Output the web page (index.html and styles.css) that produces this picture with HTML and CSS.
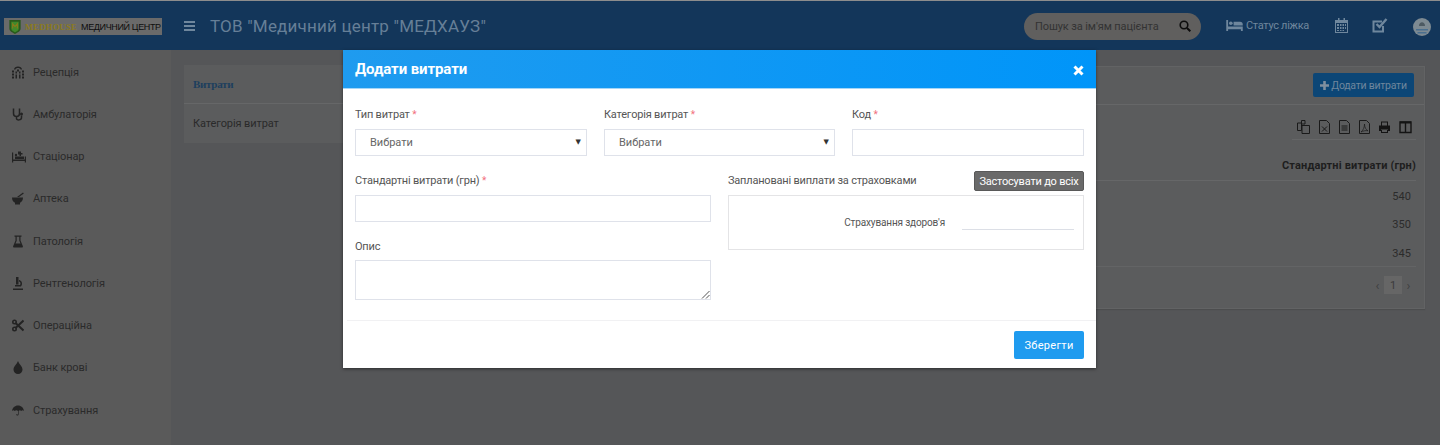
FILE: index.html
```html
<!DOCTYPE html>
<html lang="uk">
<head>
<meta charset="utf-8">
<title>Витрати</title>
<link rel="stylesheet" href="styles.css">
</head>
<body>
<header class="topbar">
  <div class="logo">
    <svg class="logo-mark" viewBox="0 0 12 16"><path d="M0 1h12v9c0 3-3 4-6 6-3-2-6-3-6-6z" fill="#2a5a1c"/><path d="M2 3h8v7c0 2-2 3-4 4-2-1-4-2-4-4z" fill="#3f8a2a"/><path d="M3.500 10V5l2.500 3 2.500-3v5" fill="none" stroke="#8a7a1a" stroke-width="1.200"/></svg>
    <span class="logo-brand">MEDHOUSE</span>
    <span class="logo-text">МЕДИЧНИЙ ЦЕНТР</span>
  </div>
  <svg class="burger" viewBox="0 0 11 10"><path d="M0 0h11v2H0zM0 4h11v2H0zM0 8h11v2H0z"/></svg>
  <h1 class="org">ТОВ "Медичний центр "МЕДХАУЗ"</h1>
  <div class="search">
    <span class="search-text">Пошук за ім'ям пацієнта</span>
    <svg class="search-icon" viewBox="0 0 12 12"><circle cx="5" cy="5" r="3.800" fill="none" stroke="#0c0c0c" stroke-width="1.600"/><path d="M8 8l3.300 3.300" stroke="#0c0c0c" stroke-width="2" fill="none"/></svg>
  </div>
  <div class="bed-status">
    <svg class="bar-icon-wide" viewBox="0 0 18 12"><path d="M0 0h2v7h16v5h-2v-2H2v2H0z"/><circle cx="5" cy="3.500" r="2"/><path d="M8 2h7c2 0 3 1 3 3v1H8z"/></svg>
    <span>Статус ліжка</span>
  </div>
  <svg class="calendar" viewBox="0 0 13 15"><path fill-rule="evenodd" d="M0 2h3V0h1.500v2h4V0H10v2h3v13H0zM1 5v9h11V5z"/><path d="M2 6h2v2H2zM5 6h1.500v2H5zM7.500 6H9v2H7.500zM10 6h1v2h-1zM2 9h2v2H2zM5 9h1.500v2H5zM7.500 9H9v2H7.500zM10 9h1v2h-1zM2 12h2v1H2zM5 12h1.500v1H5zM7.500 12H9v1H7.500z"/></svg>
  <svg class="checkbox" viewBox="0 0 16 15"><path d="M11 8v5.500H1.500v-10H10" fill="none" stroke="#6f879d" stroke-width="2"/><path d="M4.500 6l3 3 7-8" fill="none" stroke="#6f879d" stroke-width="2.400"/></svg>
  <svg class="avatar" viewBox="0 0 18 18"><circle cx="9" cy="9" r="9" fill="#7d8a92"/><path d="M6 8c0-5 6-5 6 0z" fill="#4d5a62"/><path d="M3 11h12v1.500H3zM4.500 14h9v1.500h-9z" fill="#4a6f8f"/></svg>
</header>

<div class="app">
  <nav class="sidebar">
    <a class="nav-item"><svg class="nav-icon" viewBox="0 0 12 12"><path d="M0 4h2v2H0zM0 7h2v2H0zM0 10h2v2H0zM10 4h2v2h-2zM10 7h2v2h-2zM10 10h2v2h-2zM2 3c0-4 8-4 8 0H8.500C8.500 1 3.500 1 3.500 3zM5 3h2v2H5zM3.500 5h1.500v2H3.500zM7 5h1.500v2H7zM3.500 8h1.500v4H3.500zM7 8h1.500v4H7z"/></svg><span>Рецепція</span></a>
    <a class="nav-item"><svg class="nav-icon" viewBox="0 0 12 12"><path d="M1.500 0v5c0 4 6 4 6 0V0M4.500 8v2c0 2 5 2 5-1V7" fill="none" stroke="#232323" stroke-width="1.500"/><circle cx="9.500" cy="5.500" r="1.500"/></svg><span>Амбулаторія</span></a>
    <a class="nav-item"><svg class="nav-icon nav-icon-wide" viewBox="0 0 14 12"><path d="M0 2h1.200v7h11.600V6H14v6h-1.200v-1.500H1.200V12H0z"/><path d="M3 6h9v2.500H3z"/><circle cx="4" cy="4.500" r="1.200"/><path d="M6 1h3v1.500h1.500V4H9v1.500H7.500V4H6z"/></svg><span>Стаціонар</span></a>
    <a class="nav-item"><svg class="nav-icon" viewBox="0 0 12 12"><path d="M0 5h11c0 3-1.500 4.500-3 5.300V12H3v-1.700C1.500 9.500 0 8 0 5z"/><path d="M5 4.500L11 0l.8 1L7 4.500z"/></svg><span>Аптека</span></a>
    <a class="nav-item"><svg class="nav-icon" viewBox="0 0 12 12"><path d="M2.500 0h7v1.200h-1V5L11 11l-.5 1h-9L1 11l2.500-6V1.200h-1zM4.700 1.200v4L3.500 8h5L7.300 5.200v-4z"/></svg><span>Патологія</span></a>
    <a class="nav-item"><svg class="nav-icon" viewBox="0 0 12 13"><path d="M1 11.500h10V13H1zM4 0h2.500v7.500H4z"/><path d="M7 3c3 .5 4 4 2 6.500H3V8h5c1-1 .5-3-1-3.500z"/></svg><span>Рентгенологія</span></a>
    <a class="nav-item"><svg class="nav-icon" viewBox="0 0 12 12"><circle cx="2.500" cy="2.500" r="1.700" fill="none" stroke="#232323" stroke-width="1.600"/><circle cx="2.500" cy="9.500" r="1.700" fill="none" stroke="#232323" stroke-width="1.600"/><path d="M3.500 3.500L11.500 11M3.500 8.500L11.500 1" stroke="#232323" stroke-width="2" fill="none"/></svg><span>Операційна</span></a>
    <a class="nav-item"><svg class="nav-icon" viewBox="0 0 12 13"><path d="M6 0c1 3 4.500 5.500 4.500 8.500A4.500 4.500 0 0 1 1.500 8.500C1.500 5.500 5 3 6 0z"/></svg><span>Банк крові</span></a>
    <a class="nav-item"><svg class="nav-icon" viewBox="0 0 13 13"><path d="M6.500 1C10 1 12.500 3.500 13 7c-1-1-2-1-3 0-1-1-2-1-2.800 0v3.500c0 2-2.700 2-2.700 0h1.300c0 .7.700.7.700 0V7C5.500 6 4 6 3 7c-1-1-2-1-3 0C.5 3.500 3 1 6.500 1z"/></svg><span>Страхування</span></a>
  </nav>

  <main class="content">
    <section class="panel side-panel">
      <div class="side-head">Витрати</div>
      <div class="side-row">Категорія витрат</div>
    </section>

    <section class="panel main-panel">
      <div class="main-head">
        <button class="add-btn"><svg class="plus" viewBox="0 0 9 9"><path d="M3.200 0h2.600v3.200H9v2.600H5.800V9H3.200V5.800H0V3.200h3.200z"/></svg>Додати витрати</button>
      </div>
      <div class="tools">
        <svg class="tool tool-wide" viewBox="0 0 13 14"><path d="M4.500 .5H8v3.500H4.500zM.5 3h4v7.500h-4zM5 5.500h7.500v8H5z" fill="none" stroke="#1a1a1a"/></svg>
        <svg class="tool" viewBox="0 0 11 14"><path d="M.5 .5h7l3 3v10H.5z" fill="none" stroke="#1a1a1a"/><path d="M3 6.500l5 5M8 6.500l-5 5" stroke="#1a1a1a"/></svg>
        <svg class="tool" viewBox="0 0 11 14"><path d="M.5 .5h7l3 3v10H.5z" fill="none" stroke="#1a1a1a"/><path d="M2.500 6h6M2.500 8h6M2.500 10h6" stroke="#1a1a1a"/></svg>
        <svg class="tool" viewBox="0 0 11 14"><path d="M.5 .5h7l3 3v10H.5z" fill="none" stroke="#1a1a1a"/><path d="M5.500 4c0 3-1 6-3.500 8 2-1 4.500-1.800 7-1.200-2-1-3.500-3.500-3.500-6.800z" fill="none" stroke="#1a1a1a" stroke-width=".7"/></svg>
        <svg class="tool" viewBox="0 0 11 14"><path d="M2 1.500h7v4H2zM0 5.500h11v5.500H9V9.500H2V11H0zM2 10h7v3H2z" fill="#141414"/><path d="M3 2.500h5v3H3zM3 10h5v2H3z" fill="#5a5b5c"/></svg>
        <svg class="tool tool-wide" viewBox="0 0 13 14"><path d="M1 2h11v10.500H1zM6.500 2v10.500" fill="none" stroke="#141414" stroke-width="1.400"/><path d="M1 1.500h11V3.500H1z" fill="#141414"/></svg>
      </div>
      <div class="table-head">Стандартні витрати (грн)</div>
      <div class="table-body">
        <div class="cell">540</div>
        <div class="cell">350</div>
        <div class="cell">345</div>
      </div>
      <div class="pager">
        <span class="pager-arrow">‹</span>
        <span class="pager-page">1</span>
        <span class="pager-arrow">›</span>
      </div>
    </section>
  </main>
</div>

<div class="modal">
  <div class="modal-head">
    <h2 class="modal-title">Додати витрати</h2>
    <svg class="modal-close" viewBox="0 0 11 11"><path d="M1.500 1.500l8 8M9.500 1.500l-8 8" stroke="#fff" stroke-width="3" fill="none"/></svg>
  </div>
  <div class="modal-body">
    <div class="row-three">
      <div class="field">
        <label class="label">Тип витрат <i class="req">*</i></label>
        <div class="select">Вибрати<span class="caret">▼</span></div>
      </div>
      <div class="field">
        <label class="label">Категорія витрат <i class="req">*</i></label>
        <div class="select">Вибрати<span class="caret">▼</span></div>
      </div>
      <div class="field">
        <label class="label">Код <i class="req">*</i></label>
        <div class="input"></div>
      </div>
    </div>
    <div class="row-two">
      <div class="col">
        <div class="field">
          <label class="label">Стандартні витрати (грн) <i class="req">*</i></label>
          <div class="input"></div>
        </div>
        <div class="field field-desc">
          <label class="label">Опис</label>
          <div class="textarea">
            <svg class="grip" viewBox="0 0 9 9"><path d="M1 8.500L8.500 1M5 8.500L8.500 5" stroke="#555" fill="none"/></svg>
          </div>
        </div>
      </div>
      <div class="col">
        <div class="plan-head">
          <span class="label">Заплановані виплати за страховками</span>
          <button class="apply-btn">Застосувати до всіх</button>
        </div>
        <div class="plan-box">
          <span class="plan-name">Страхування здоров'я</span>
          <span class="plan-line"></span>
        </div>
      </div>
    </div>
  </div>
  <div class="modal-foot">
    <button class="save-btn">Зберегти</button>
  </div>
</div>
</body>
</html>
```

FILE: styles.css
```css
* { box-sizing: border-box; }
html, body { margin: 0; height: 445px; overflow: hidden; }
body {
  background: #555658;
  font-family: Roboto, "Noto Sans", sans-serif;
  font-size: 11px;
  color: #2a2a2a;
  display: flex;
  flex-direction: column;
}
h1, h2 { margin: 0; font-weight: normal; }
button { font-family: inherit; border: 0; padding: 0; }

.topbar {
  height: 50px;
  flex: none;
  background: #13365a;
  border-top: 1px solid #8d8d8d;
  display: flex;
  align-items: center;
  padding-left: 4px;
  fill: #6f879d;
  color: #6f879d;
}
.logo {
  width: 158px;
  height: 17px;
  margin-top: 2px;
  background: #6a6a6a;
  display: flex;
  align-items: center;
  padding-left: 5px;
  white-space: nowrap;
  flex: none;
}
.logo-mark { width: 12px; height: 15px; margin-right: 4px; flex: none; }
.logo-brand {
  font: bold 8.500px "Liberation Serif", serif;
  letter-spacing: .3px;
  color: #8c7b1c;
  margin-right: 4px;
}
.logo-text { font: 9px "Liberation Sans", sans-serif; letter-spacing: -.35px; color: #0d0d0d; }
.burger { width: 11px; height: 10px; margin-left: 22px; margin-top: 1px; flex: none; }
.org {
  margin-left: 15px;
  font: 17px Roboto, sans-serif;
  letter-spacing: .2px;
  color: #667f97;
  white-space: nowrap;
  flex: 1;
}
.search {
  width: 177px;
  height: 27px;
  border-radius: 14px;
  background: #605f5e;
  display: flex;
  align-items: center;
  justify-content: space-between;
  padding: 0 10px 0 11px;
  margin-top: 1px;
  flex: none;
}
.search-text { font-size: 11px; letter-spacing: -.1px; color: #333; white-space: nowrap; }
.search-icon { width: 12px; height: 12px; flex: none; }
.bed-status {
  margin-left: 25px;
  display: flex;
  align-items: center;
  gap: 3px;
  font-size: 11px;
  letter-spacing: -.3px;
  white-space: nowrap;
  flex: none;
}
.bar-icon-wide { width: 17px; height: 11px; flex: none; }
.calendar { width: 13px; height: 15px; margin-left: 26px; flex: none; }
.checkbox { width: 16px; height: 15px; margin-left: 24px; flex: none; }
.avatar { width: 18px; height: 18px; margin-left: 25px; margin-right: 9px; margin-top: 2px; flex: none; }

.app { flex: 1; display: flex; min-height: 0; }
.sidebar {
  width: 171px;
  flex: none;
  background: #5a5a5a;
  display: flex;
  flex-direction: column;
  padding-top: 1px;
}
.nav-item {
  height: 42.250px;
  flex: none;
  display: flex;
  align-items: center;
  padding-left: 12px;
  color: #2a2a2a;
  letter-spacing: -.1px;
  font-size: 11px;
  fill: #232323;
}
.nav-icon { width: 12px; height: 13px; margin-right: 9px; flex: none; }
.nav-icon-wide { width: 14px; margin-right: 7px; }

.content { flex: 1; display: flex; padding: 15px 15px 0 13px; gap: 14px; align-items: flex-start; min-width: 0; }
.panel { background: #5b5c5d; }
.side-panel { width: 170px; flex: none; }
.side-head {
  height: 39px;
  display: flex;
  align-items: center;
  padding-left: 9px;
  font: bold 11px "Liberation Serif", serif;
  letter-spacing: -.3px;
  color: #1d3f5e;
  border-bottom: 1px solid #666768;
}
.side-row {
  height: 39px;
  display: flex;
  align-items: center;
  padding-left: 9px;
  letter-spacing: -.1px;
  color: #2a2a2a;
}
.main-panel {
  flex: 1;
  height: 243px;
  margin-top: 1px;
  border: 1px solid #626364;
  padding: 0 8px 0 0;
  box-shadow: 0 1px 1px #4c4d4e;
}
.main-head {
  height: 38px;
  margin-right: -8px;
  border-bottom: 1px solid #666768;
  display: flex;
  justify-content: flex-end;
  align-items: flex-start;
  padding: 6px 10px 0 0;
}
.add-btn {
  width: 101px;
  height: 24px;
  border-radius: 2px;
  background: #0c4676;
  color: #6f879d;
  font-size: 10.500px;
  letter-spacing: -.25px;
  display: flex;
  align-items: center;
  justify-content: center;
  gap: 2px;
  fill: #7f8f9f;
  white-space: nowrap;
}
.plus { width: 9px; height: 9px; flex: none; }
.tools {
  margin-left: auto;
  width: 124px;
  height: 35px;
  border-bottom: 1px solid #656667;
  display: flex;
  align-items: flex-start;
  justify-content: flex-end;
  gap: 9px;
  padding: 15px 4px 0 0;
}
.tool { width: 11px; height: 14px; flex: none; }
.tool-wide { width: 13px; }
.table-head {
  height: 41px;
  border-bottom: 1px solid #666768;
  display: flex;
  align-items: flex-end;
  justify-content: flex-end;
  font-weight: bold;
  letter-spacing: .15px;
  color: #1e1e1e;
  font-size: 11px;
  padding-bottom: 8px;
}
.table-body { border-bottom: 1px solid #636465; height: 86px; padding-top: 1px; }
.cell {
  height: 28.500px;
  display: flex;
  align-items: center;
  justify-content: flex-end;
  padding-right: 5px;
  font-size: 11px;
  letter-spacing: .1px;
  color: #2b2b2b;
}
.pager {
  display: flex;
  justify-content: flex-end;
  align-items: center;
  height: 18px;
  margin-top: 9px;
  gap: 4px;
  color: #3f4041;
  padding-right: 5px;
}
.pager-arrow { font-size: 13px; width: 5px; text-align: center; }
.pager-page {
  width: 18px;
  height: 18px;
  background: #666666;
  display: flex;
  align-items: center;
  justify-content: center;
  color: #3b3b3b;
}

.modal {
  position: absolute;
  left: 343px;
  top: 50px;
  width: 753px;
  height: 318px;
  background: #fff;
  box-shadow: 0 1px 3px rgba(0,0,0,.5);
  display: flex;
  flex-direction: column;
  color: #555;
}
.modal-head {
  height: 39px;
  flex: none;
  background: linear-gradient(90deg, #1f9bef, #0095f9);
  border-bottom: 1px solid #a5d6f7;
  display: flex;
  align-items: center;
  justify-content: space-between;
  padding: 0 12px;
}
.modal-title { font-size: 15px; font-weight: bold; color: #fff; letter-spacing: -.1px; }
.modal-close { width: 11px; height: 11px; margin-top: 2px; }
.modal-body { flex: 1; padding: 16px 12px 0; }
.label { font-size: 11px; letter-spacing: -.2px; color: #555; white-space: nowrap; line-height: 20px; }
.req { font-style: normal; font-size: 10px; color: #f2707c; }
.field { display: flex; flex-direction: column; gap: 4px; min-width: 0; }
.row-three {
  display: grid;
  grid-template-columns: 232px 231px 232px;
  column-gap: 17px;
}
.row-two {
  display: grid;
  grid-template-columns: 356px 356px;
  column-gap: 17px;
  margin-top: 15px;
}
.select, .input, .textarea {
  border: 1px solid #dfe2ea;
  height: 27px;
  background: #fff;
}
.select {
  position: relative;
  display: flex;
  align-items: center;
  padding-left: 14px;
  font-size: 11px;
  color: #666;
}
.caret {
  position: absolute;
  right: 5px;
  top: 8px;
  font: 7px "DejaVu Sans", sans-serif;
  color: #333;
}
.field-desc { margin-top: 15px; gap: 3px; }
.textarea { height: 40px; position: relative; }
.grip { position: absolute; right: 0; bottom: 0; width: 9px; height: 9px; }
.plan-head {
  height: 24px;
  display: flex;
  justify-content: space-between;
  align-items: flex-start;
}
.apply-btn {
  width: 110px;
  height: 20px;
  border-radius: 2px;
  border: 1px solid #595959;
  background: #6a6a6a;
  color: #fff;
  font-size: 11px;
  letter-spacing: -.2px;
  white-space: nowrap;
}
.plan-box {
  height: 55px;
  border: 1px solid #e4e4e6;
  display: flex;
  align-items: flex-end;
  justify-content: flex-end;
  padding: 0 9px 19px 0;
  gap: 17px;
}
.plan-name { font-size: 10px; letter-spacing: -.15px; color: #555; line-height: 14px; white-space: nowrap; }
.plan-line { width: 112px; height: 1px; background: #dcdfe6; }
.modal-foot {
  height: 48px;
  flex: none;
  margin-left: 4px;
  border-top: 1px solid #f1f1f3;
  display: flex;
  justify-content: flex-end;
  align-items: flex-start;
  padding: 10px 12px 0 0;
}
.save-btn {
  width: 70px;
  height: 28px;
  border-radius: 2px;
  background: #1f9bef;
  color: #fff;
  font-size: 11px;
  letter-spacing: .3px;
}
```
